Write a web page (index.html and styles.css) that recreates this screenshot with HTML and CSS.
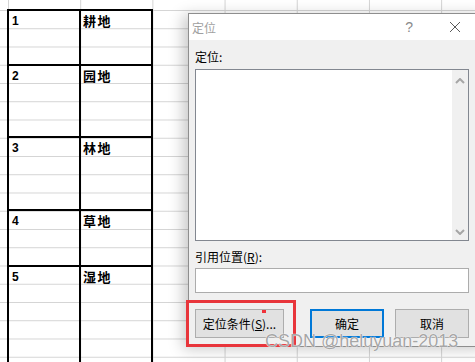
FILE: index.html
```html
<!DOCTYPE html>
<html>
<head>
<meta charset="utf-8">
<link rel="stylesheet" href="styles.css">
</head>
<body>
<div class="sheet">
  <div class="tbl">
    <div class="cell num">1</div><div class="cell name">耕地</div>
    <div class="cell num">2</div><div class="cell name">园地</div>
    <div class="cell num">3</div><div class="cell name">林地</div>
    <div class="cell num">4</div><div class="cell name">草地</div>
    <div class="cell num">5</div><div class="cell name">湿地</div>
  </div>
</div>

<div class="dialog">
  <div class="titlebar">
    <span class="title">定位</span>
    <span class="help">?</span>
    <svg class="close" width="12" height="12" viewBox="0 0 12 12"><path d="M1 1 L11 11 M11 1 L1 11" stroke="#5a5a5a" stroke-width="1" fill="none"/></svg>
  </div>
  <div class="dbody">
    <div class="label">定位:</div>
    <div class="listbox">
      <div class="list-area"></div>
      <div class="vscroll">
        <svg width="10" height="6" viewBox="0 0 10 6"><path d="M1 5 L5 1 L9 5" stroke="#a6a6a6" stroke-width="2" fill="none"/></svg>
        <svg width="10" height="6" viewBox="0 0 10 6"><path d="M1 1 L5 5 L9 1" stroke="#a6a6a6" stroke-width="2" fill="none"/></svg>
      </div>
    </div>
    <div class="label label2">引用位置(<u>R</u>):</div>
    <div class="input"></div>
    <div class="buttons">
      <div class="btn btn-special">定位条件(<u>S</u>)...</div>
      <div class="btn btn-ok">确定</div>
      <div class="btn btn-cancel">取消</div>
    </div>
  </div>
</div>

<div class="highlight"></div>
<div class="reddot"></div>
<div class="watermark">CSDN @heluyuan-2013</div>
</body>
</html>
```
FILE: styles.css
```css
html, body {
  margin: 0;
  padding: 0;
  height: 100%;
}
body {
  width: 475px;
  height: 362px;
  overflow: hidden;
  position: relative;
  background-color: #fff;
  background-image:
    linear-gradient(to bottom, #d4d4d4 1px, transparent 1px),
    linear-gradient(to right, #d4d4d4 1px, transparent 1px);
  background-size: 100% 18.26px, 72.2px 100%;
  background-position: 0 10px, 8px 0;
  font-family: "Noto Sans CJK SC", sans-serif;
}
.sheet {
  padding: 9px 0 0 7px;
}
.tbl {
  display: grid;
  grid-template-columns: 72px 72px;
  grid-template-rows: 55px 72px 73px 56px 110px;
  width: 144px;
  border-left: 2px solid #000;
}
.cell {
  box-sizing: border-box;
  border-top: 2px solid #000;
  border-right: 2px solid #000;
  background: transparent;
  font-weight: bold;
  font-size: 12px;
  line-height: 16px;
  padding-top: 2px;
  color: #000;
}
.num {
  font-family: "Liberation Sans", Arial, sans-serif;
  padding-left: 3px;
}
.name {
  font-family: "Noto Sans CJK SC", sans-serif;
  font-size: 13px;
  letter-spacing: 1.5px;
  padding-left: 2px;
}

.dialog {
  position: absolute;
  left: 188px;
  top: 13px;
  width: 300px;
  height: 334px;
  box-sizing: border-box;
  border: 1px solid #8e8e8e;
  background: #f0f0f0;
  box-shadow: -5px 2px 14px rgba(0,0,0,0.22);
}
.titlebar {
  height: 26px;
  background: #fff;
  display: flex;
  align-items: center;
  font-size: 12px;
}
.title {
  color: #a0a0a0;
  margin-left: 3px;
}
.help {
  margin-left: auto;
  color: #8a8a8a;
  font-family: "Liberation Sans", Arial, sans-serif;
  font-size: 14px;
  margin-right: 36px;
}
.close {
  margin-right: 26px;
}
.dbody {
  padding: 9px 0 0 6px;
}
.label {
  font-size: 12px;
  line-height: 16px;
  color: #000;
  height: 16px;
}
.label2 {
  margin-top: 8px;
}
.listbox {
  margin-top: 4px;
  width: 274px;
  height: 172px;
  box-sizing: border-box;
  border: 1px solid #828790;
  background: #fff;
  display: flex;
}
.list-area {
  flex: 1;
}
.vscroll {
  width: 16px;
  background: #f0f0f0;
  display: flex;
  flex-direction: column;
  justify-content: space-between;
  align-items: center;
  padding: 8px 0 5px;
}
.vscroll svg {
  display: block;
}
.input {
  margin-top: 3px;
  width: 274px;
  height: 25px;
  box-sizing: border-box;
  border: 1px solid #acacac;
  background: #fff;
}
.buttons {
  margin-top: 16px;
  display: flex;
  width: 274px;
}
.btn {
  box-sizing: border-box;
  height: 29px;
  border: 1px solid #adadad;
  background: #e1e1e1;
  font-size: 12px;
  color: #000;
  display: flex;
  align-items: center;
  justify-content: center;
}
.btn-special {
  width: 89px;
}
.btn-ok {
  width: 74px;
  margin-left: 26px;
  border: 2px solid #0078d7;
}
.btn-cancel {
  width: 74px;
  margin-left: 11px;
}
.highlight {
  position: absolute;
  left: 186px;
  top: 300px;
  width: 110px;
  height: 47px;
  box-sizing: border-box;
  border: 3px solid #e8353b;
}
.reddot {
  position: absolute;
  left: 262px;
  top: 310px;
  width: 4px;
  height: 3px;
  background: #f0323a;
}
.watermark {
  position: absolute;
  left: 265px;
  top: 331px;
  font-family: "Liberation Sans", Arial, sans-serif;
  font-size: 18px;
  color: rgba(150,150,150,0.85);
  text-shadow: 0 0 1px #fff, 0 0 1px #fff;
  white-space: nowrap;
}
```
